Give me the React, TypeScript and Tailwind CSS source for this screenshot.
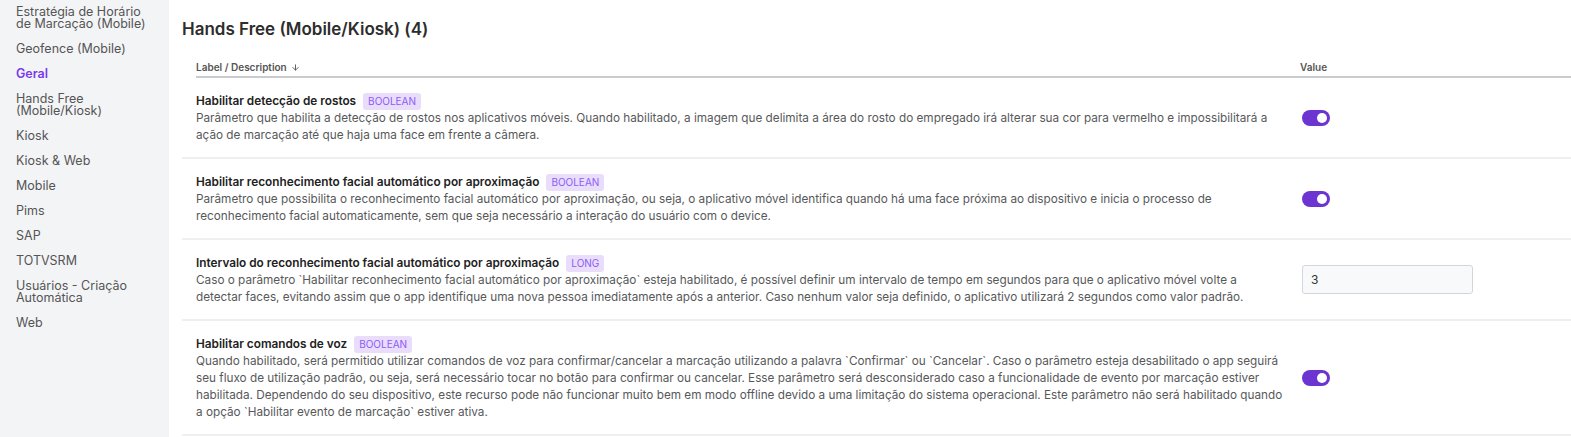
import React from "react";
import { ArrowDown } from "lucide-react";

const menu = [
  { label: "Estratégia de Horário\nde Marcação (Mobile)" },
  { label: "Geofence (Mobile)" },
  { label: "Geral", active: true },
  { label: "Hands Free\n(Mobile/Kiosk)" },
  { label: "Kiosk" },
  { label: "Kiosk & Web" },
  { label: "Mobile" },
  { label: "Pims" },
  { label: "SAP" },
  { label: "TOTVSRM" },
  { label: "Usuários - Criação\nAutomática" },
  { label: "Web" },
];

interface Param {
  label: string;
  type: string;
  description: string;
  kind: "toggle" | "input";
  value?: string;
}

const params: Param[] = [
  {
    label: "Habilitar detecção de rostos",
    type: "BOOLEAN",
    description:
      "Parâmetro que habilita a detecção de rostos nos aplicativos móveis. Quando habilitado, a imagem que delimita a área do rosto do empregado irá alterar sua cor para vermelho e impossibilitará a ação de marcação até que haja uma face em frente a câmera.",
    kind: "toggle",
  },
  {
    label: "Habilitar reconhecimento facial automático por aproximação",
    type: "BOOLEAN",
    description:
      "Parâmetro que possibilita o reconhecimento facial automático por aproximação, ou seja, o aplicativo móvel identifica quando há uma face próxima ao dispositivo e inicia o processo de reconhecimento facial automaticamente, sem que seja necessário a interação do usuário com o device.",
    kind: "toggle",
  },
  {
    label: "Intervalo do reconhecimento facial automático por aproximação",
    type: "LONG",
    description:
      "Caso o parâmetro `Habilitar reconhecimento facial automático por aproximação` esteja habilitado, é possível definir um intervalo de tempo em segundos para que o aplicativo móvel volte a detectar faces, evitando assim que o app identifique uma nova pessoa imediatamente após a anterior. Caso nenhum valor seja definido, o aplicativo utilizará 2 segundos como valor padrão.",
    kind: "input",
    value: "3",
  },
  {
    label: "Habilitar comandos de voz",
    type: "BOOLEAN",
    description:
      "Quando habilitado, será permitido utilizar comandos de voz para confirmar/cancelar a marcação utilizando a palavra `Confirmar` ou `Cancelar`. Caso o parâmetro esteja desabilitado o app seguirá seu fluxo de utilização padrão, ou seja, será necessário tocar no botão para confirmar ou cancelar. Esse parâmetro será desconsiderado caso a funcionalidade de evento por marcação estiver habilitada. Dependendo do seu dispositivo, este recurso pode não funcionar muito bem em modo offline devido a uma limitação do sistema operacional. Este parâmetro não será habilitado quando a opção `Habilitar evento de marcação` estiver ativa.",
    kind: "toggle",
  },
];

const Toggle = () => (
  <div className="flex h-[16px] w-[28px] items-center justify-end rounded-full bg-[#6c35d1] pr-[3px]">
    <div className="h-[10px] w-[10px] rounded-full bg-white" />
  </div>
);

export default function App() {
  return (
    <div className="flex h-[437px] w-full overflow-hidden bg-white font-['Inter',sans-serif]">
      <aside className="flex w-[169px] shrink-0 flex-col gap-[13px] bg-[#f3f4f6] pl-[16px] pt-[6px]">
        {menu.map((m) => (
          <div
            key={m.label}
            className={
              "whitespace-pre-line text-[12.5px] leading-[12px] " +
              (m.active ? "font-semibold text-[#7c3aed]" : "text-[#555]")
            }
          >
            {m.label}
          </div>
        ))}
      </aside>

      <main className="flex min-w-0 flex-1 flex-col pl-[13px]">
        <h1 className="pt-[18px] text-[17px] font-semibold leading-[22px] text-[#2d2d2d]">
          Hands Free (Mobile/Kiosk) (4)
        </h1>

        <div className="mt-[21px] w-[1420px]">
          <div className="ml-[14px] flex border-b-2 border-[#c9cbcf] pb-[2px] text-[10px] font-semibold leading-[13px] text-[#555]">
            <div className="flex w-[1104px] items-center gap-[4px]">
              Label / Description
              <ArrowDown className="h-[9px] w-[9px]" strokeWidth={2.5} />
            </div>
            <div>Value</div>
          </div>

          {params.map((p) => (
            <div key={p.label} className="flex items-center border-b-2 border-[#eeeff1]">
              <div className="w-[1118px] shrink-0 pb-[13px] pl-[14px] pr-[16px] pt-[15px]">
                <div className="flex items-center gap-[7px]">
                  <span className="text-[11.8px] font-semibold leading-[17px] text-[#222]">{p.label}</span>
                  <span className="rounded-[3px] bg-[#eadcfb] px-[5px] text-[10px] leading-[17px] text-[#8b5cf6]">
                    {p.type}
                  </span>
                </div>
                <p className="text-[11.75px] leading-[17px] text-[#57585a]">{p.description}</p>
              </div>
              <div className="pl-[2px]">
                {p.kind === "toggle" ? (
                  <Toggle />
                ) : (
                  <div className="flex h-[29px] w-[171px] items-center rounded-[3px] border border-[#d3d5d8] bg-[#f8f9fa] px-[8px] text-[12px] text-[#333]">
                    {p.value}
                  </div>
                )}
              </div>
            </div>
          ))}
        </div>
      </main>
    </div>
  );
}
